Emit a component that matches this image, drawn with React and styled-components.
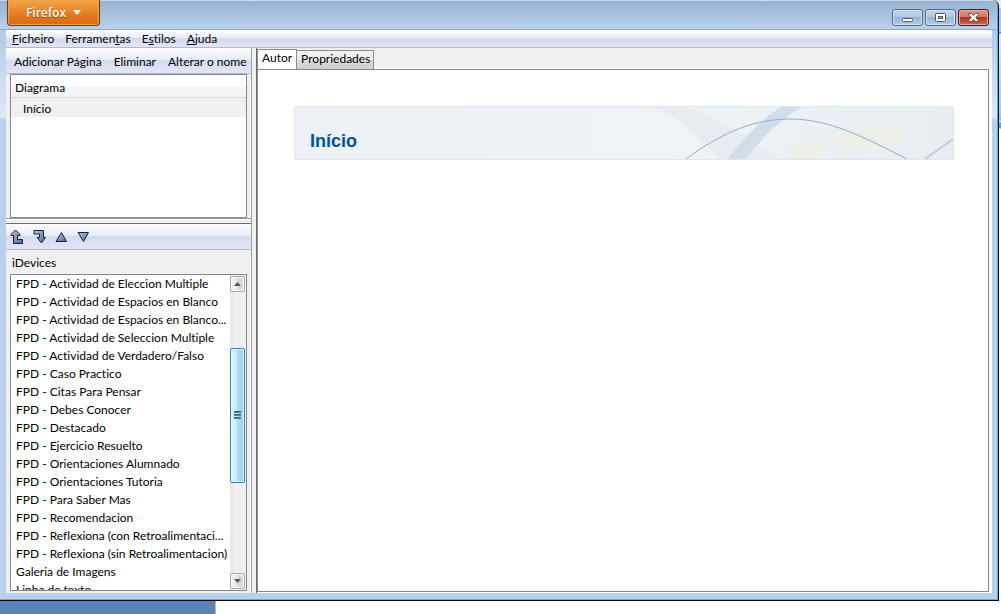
import React from "react";
import styled, { createGlobalStyle } from "styled-components";

const Global = createGlobalStyle`
  * { box-sizing: border-box; }
  html, body { margin: 0; padding: 0; background: #fff; }
  body, button { font-family: Lato, "Open Sans", sans-serif; font-size: 12px; font-variant-ligatures: none; color: #000; }
  button { margin: 0; padding: 0; border: 0; background: none; }
  ul { margin: 0; padding: 0; list-style: none; }
  h1, h2 { margin: 0; font-size: 12px; font-weight: 400; }
`;

const Desktop = styled.div`
  display: grid;
  grid-template: minmax(0, 1fr) 13px / minmax(0, 1fr) 2px;
  height: 100vh;
  overflow: hidden;
`;

const DesktopEdge = styled.div`
  background: linear-gradient(#e9eef5 0 8px, #a9c9f3 8px 32px, #5c86c4 32px 33px, #dfe9f6 34px, #a5c6ee 119px, #6f9fc8 120px, #e4f2fb 121px 122px, #5f9fd0 123px 128px, #fff 129px);
`;

const DesktopStrip = styled.div`
  grid-column: 1 / -1;
  background: linear-gradient(90deg, #5b84bb 0 214px, #6a7686 215px, #fff 216px);
`;

const Window = styled.div`
  display: flex;
  flex-direction: column;
  min-height: 0;
  padding: 0 6px 6px 6px;
  border-right: 1px solid #000;
  border-bottom: 1px solid #000;
  border-top-right-radius: 6px;
  box-shadow: inset -1px -1px 0 #35bfe0;
  background: linear-gradient(#99b4d2, #b3cbe5 30px, #dde9f7 118px, #b9d1ea 119px);
`;

const TitleBar = styled.header`
  display: flex;
  justify-content: space-between;
  flex: none;
  height: 30px;
  margin: 0 -5px 0 -6px;
  padding: 0 8px 0 7px;
  border-top: 1px solid #c7d9ec;
  border-bottom: 1px solid #8fa5c0;
  border-top-right-radius: 6px;
  background: linear-gradient(#98b3d1, #b9d1ea);
`;

const FirefoxButton = styled.button`
  display: flex;
  align-items: center;
  justify-content: center;
  gap: 7px;
  width: 93px;
  height: 26px;
  margin-top: -1px;
  border: 1px solid #6b3c10;
  border-top: 0;
  border-radius: 0 0 4px 4px;
  box-shadow: inset 0 0 0 1px #f3a04a;
  background: linear-gradient(#f3a748, #e0731b 70%, #dc6c14);
  color: #fff;
  font-family: "Open Sans", sans-serif;
  font-weight: 600;
  text-shadow: 0 1px 1px #8a4a10;
`;

const WindowControls = styled.div`
  display: flex;
  gap: 2px;
  padding-top: 8px;
`;

const WindowButton = styled.button`
  display: flex;
  align-items: center;
  justify-content: center;
  width: 31px;
  height: 17px;
  border: 1px solid ${(p) => (p.$close ? "#4f1c26" : "#52698a")};
  border-radius: 3px;
  box-shadow: inset 0 0 0 1px ${(p) => (p.$close ? "#e5a99d" : "#d5e4f3")};
  background: ${(p) =>
    p.$close
      ? "linear-gradient(#dc9a8c, #cf7463 50%, #b23120 50%, #cd6a4e)"
      : "linear-gradient(#c3d6ea, #b0c8e1 50%, #98b4d3 50%, #b4cde7)"};
`;

const Client = styled.div`
  display: flex;
  flex-direction: column;
  flex: 1;
  min-height: 0;
  margin-bottom: 1px;
  background: #f0f0f0;
`;

const bar = `
  display: flex;
  align-items: center;
  flex: none;
  border-bottom: 1px solid #b3b8d3;
  background: linear-gradient(#fff, #e8ecf7 45%, #d4dbee 50%, #e2e7f6);
`;

const MenuBar = styled.nav`
  ${bar}
  gap: 11px;
  height: 18px;
  padding-left: 6px;
`;

const Workspace = styled.div`
  display: flex;
  flex: 1;
  min-height: 0;
`;

const Sidebar = styled.aside`
  display: flex;
  flex-direction: column;
  flex: none;
  width: 246px;
  border-right: 1px solid #a0a0a0;
`;

const Toolbar = styled.div`
  ${bar}
  gap: ${(p) => p.$gap}px;
  height: 26px;
  padding: ${(p) => p.$top}px 0 0 ${(p) => p.$inset}px;
`;

const BarButton = styled.button`
  line-height: 16px;
  white-space: nowrap;
`;

const IconButton = styled.button`
  display: flex;
  width: 14px;
  height: 16px;
`;

const TreeBox = styled.section`
  flex: none;
  height: 144px;
  margin: 0 4px;
  border: 1px solid #828790;
  background: #fff;
`;

const TreeHeader = styled.h2`
  height: 23px;
  padding-left: 4px;
  line-height: 26px;
  border-bottom: 1px solid #d8d8da;
  background: linear-gradient(#fff 50%, #f4f5f7 55%, #f1f2f4);
`;

const TreeRow = styled.li`
  height: 19px;
  padding-left: 12px;
  line-height: 22px;
  background: #f0f0f0;
`;

const Splitter = styled.div`
  flex: none;
  height: 6px;
  border-top: 1px solid #a0a0a0;
  border-bottom: 1px solid #6d6d6d;
  box-shadow: inset 0 1px 0 #fff;
`;

const ListTitle = styled.h2`
  flex: none;
  height: 24px;
  padding-left: 6px;
  line-height: 26px;
`;

const ListBox = styled.section`
  display: flex;
  flex: 1;
  min-height: 0;
  margin: 0 4px 2px;
  border: 1px solid #828790;
  background: #fff;
`;

const DeviceList = styled.ul`
  flex: 1;
  min-width: 0;
  overflow: hidden;
`;

const Device = styled.li`
  height: 18px;
  padding-left: 5px;
  line-height: 18px;
  white-space: nowrap;
`;

const ScrollTrack = styled.div`
  display: flex;
  flex-direction: column;
  flex: none;
  width: 16px;
  padding: 1px 1px 1px 0;
  background: linear-gradient(90deg, #e6e6e6, #f0f0f0 30%, #efefef);
`;

const ScrollArrow = styled.button`
  display: flex;
  align-items: center;
  justify-content: center;
  flex: none;
  width: 15px;
  height: 16px;
  border: 1px solid #a8a8a8;
  border-radius: 2px;
  box-shadow: inset 0 0 0 1px #fafafa;
  background: linear-gradient(90deg, #f3f3f3, #e6e6e6 50%, #d2d2d4 50%, #dcdcdc);
`;

const ScrollSpace = styled.div`
  flex: ${(p) => p.$grow} 1 0;
`;

const ScrollThumb = styled.div`
  display: flex;
  align-items: center;
  justify-content: center;
  flex: 134 1 0;
  width: 15px;
  border: 1px solid #3c7fb1;
  border-radius: 2px;
  box-shadow: inset 0 0 0 1px #e6f6fd;
  background: linear-gradient(90deg, #e0f3fd, #cbeafa 45%, #a9dbf5 50%, #9bd0ee);
`;

const Main = styled.main`
  display: flex;
  flex-direction: column;
  flex: 1;
  min-width: 0;
  margin-left: 4px;
  padding: 0 3px 1px 0;
  border-left: 1px solid #6d6d6d;
  background: linear-gradient(#f0f0f0 20px, #fff 20px);
`;

const Tabs = styled.div`
  display: flex;
  align-items: flex-end;
  flex: none;
  height: 21px;
`;

const Tab = styled.button`
  height: ${(p) => (p.$active ? 20 : 19)}px;
  padding: ${(p) => (p.$active ? "0 4px 3px" : "0 3px 2px 4px")};
  line-height: 16px;
  border: 1px solid #898c95;
  border-bottom: 0;
  border-left-width: ${(p) => (p.$active ? 1 : 0)}px;
  background: ${(p) => (p.$active ? "#fff" : "linear-gradient(#f2f2f2, #ebebeb 50%, #dddddd 50%, #cfcfcf)")};
`;

const Page = styled.article`
  flex: 1;
  padding: 36px 34px 0 36px;
  border: 1px solid #828790;
  background: #fff;
`;

const Banner = styled.div`
  display: grid;
  height: 54px;
  border: 1px solid #e0e6ea;
  background: linear-gradient(90deg, #edf1f5, #eff3f6 60%, #e8edf2);
  overflow: hidden;
  > * { grid-area: 1 / 1; }
`;

const BannerArt = styled.svg`
  display: block;
  justify-self: end;
`;

const PageTitle = styled.h1`
  align-self: end;
  padding: 0 0 7px 15px;
  font-family: "Liberation Sans", Arial, sans-serif;
  font-size: 18px;
  font-weight: 700;
  line-height: 22px;
  color: #00519e;
`;

const devices = [
  "FPD - Actividad de Eleccion Multiple",
  "FPD - Actividad de Espacios en Blanco",
  "FPD - Actividad de Espacios en Blanco...",
  "FPD - Actividad de Seleccion Multiple",
  "FPD - Actividad de Verdadero/Falso",
  "FPD - Caso Practico",
  "FPD - Citas Para Pensar",
  "FPD - Debes Conocer",
  "FPD - Destacado",
  "FPD - Ejercicio Resuelto",
  "FPD - Orientaciones Alumnado",
  "FPD - Orientaciones Tutoria",
  "FPD - Para Saber Mas",
  "FPD - Recomendacion",
  "FPD - Reflexiona (con Retroalimentaci...",
  "FPD - Reflexiona (sin Retroalimentacion)",
  "Galeria de Imagens",
  "Linha de texto",
];

const moves = [
  ["Promover", "M5.5 1 L10 5.5 V6.5 H7.5 V10.5 H12.5 V14.5 H3.5 V6.5 H1 V5.5 Z"],
  ["Despromover", "M2 1.5 H11.5 V8.5 H13.5 L9.5 14 L5 8.5 H7.5 V5 H2 Z"],
  ["Mover para cima", "M7.5 3.5 L12.5 12.5 H2 Z"],
  ["Mover para baixo", "M2 3.5 H12.5 L7.5 12.5 Z"],
];

export default function App() {
  return (
    <>
      <Global />
      <Desktop>
        <Window>
          <TitleBar>
            <FirefoxButton>
              Firefox
              <svg width="8" height="5"><path d="M0 0H8L4 5Z" fill="#fff" /></svg>
            </FirefoxButton>
            <WindowControls>
              <WindowButton aria-label="Minimizar">
                <svg width="13" height="11"><rect x="1.5" y="6.5" width="10" height="3" rx="1" fill="#fff" stroke="#505765" /></svg>
              </WindowButton>
              <WindowButton aria-label="Maximizar">
                <svg width="13" height="11">
                  <rect x="1.5" y="1.5" width="10" height="8" rx="1" fill="#fff" stroke="#505765" />
                  <rect x="4.5" y="4.5" width="4" height="2" fill="#9ab5d5" stroke="#505765" />
                </svg>
              </WindowButton>
              <WindowButton $close aria-label="Fechar">
                <svg width="13" height="11">
                  <path d="M1.5 1.5H4.5L6.5 3.5L8.5 1.5H11.5V2.5L8.8 5.5L11.5 8.5V9.5H8.5L6.5 7.5L4.5 9.5H1.5V8.5L4.2 5.5L1.5 2.5Z" fill="#fff" stroke="#56505c" />
                </svg>
              </WindowButton>
            </WindowControls>
          </TitleBar>
          <Client>
            <MenuBar>
              <BarButton><u>F</u>icheiro</BarButton>
              <BarButton>Ferramen<u>t</u>as</BarButton>
              <BarButton>E<u>s</u>tilos</BarButton>
              <BarButton><u>A</u>juda</BarButton>
            </MenuBar>
            <Workspace>
              <Sidebar>
                <Toolbar $gap={12} $inset={8} $top={2}>
                  <BarButton>Adicionar Página</BarButton>
                  <BarButton>Eliminar</BarButton>
                  <BarButton>Alterar o nome</BarButton>
                </Toolbar>
                <TreeBox>
                  <TreeHeader>Diagrama</TreeHeader>
                  <ul><TreeRow>Início</TreeRow></ul>
                </TreeBox>
                <Splitter />
                <Toolbar $gap={8} $inset={4} $top={0}>
                  {moves.map(([label, d]) => (
                    <IconButton key={label} aria-label={label}>
                      <svg width="14" height="16">
                        <defs>
                          <linearGradient id="steel" x1="0" y1="0" x2="1" y2="1">
                            <stop offset="0" stopColor="#b4c4dd" />
                            <stop offset="1" stopColor="#4a6a9c" />
                          </linearGradient>
                        </defs>
                        <path d={d} fill="url(#steel)" stroke="#1b1f2a" strokeLinejoin="round" />
                      </svg>
                    </IconButton>
                  ))}
                </Toolbar>
                <ListTitle>iDevices</ListTitle>
                <ListBox>
                  <DeviceList>
                    {devices.map((name) => <Device key={name}>{name}</Device>)}
                  </DeviceList>
                  <ScrollTrack>
                    <ScrollArrow aria-label="Subir"><svg width="7" height="4"><path d="M0 4L3.5 0L7 4Z" fill="#555" /></svg></ScrollArrow>
                    <ScrollSpace $grow={57} />
                    <ScrollThumb>
                      <svg width="7" height="9"><path d="M0 1H7M0 4H7M0 7H7" stroke="#4a8aab" strokeWidth="2" /><path d="M0 .5H7M0 3.5H7M0 6.5H7" stroke="#2b637f" /></svg>
                    </ScrollThumb>
                    <ScrollSpace $grow={91} />
                    <ScrollArrow aria-label="Descer"><svg width="7" height="4"><path d="M0 0L3.5 4L7 0Z" fill="#555" /></svg></ScrollArrow>
                  </ScrollTrack>
                </ListBox>
              </Sidebar>
              <Main>
                <Tabs role="tablist">
                  <Tab $active role="tab" aria-selected="true">Autor</Tab>
                  <Tab role="tab" aria-selected="false">Propriedades</Tab>
                </Tabs>
                <Page>
                  <Banner>
                    <BannerArt width="340" height="52" viewBox="0 0 340 52">
                      <path d="M40 0C68 10 84 28 106 52H166C138 30 100 8 72 0Z" fill="#e8ebf0" />
                      <path d="M174 40Q192 33 212 37L212 44L198 52H170L184 46ZM216 34Q240 22 260 20L294 24Q288 38 262 44L252 36L226 48Q232 36 216 34Z" fill="#edf0e6" />
                      <path d="M115 52Q142 16 168 0H189Q158 18 133 52Z" fill="#d0deec" />
                      <path d="M73 52C111 24 143 12 177 12C216 12 251 30 294 52" fill="none" stroke="#8eabd0" />
                      <path d="M312 52L340 32" fill="none" stroke="#c8c9de" strokeWidth="2" />
                    </BannerArt>
                    <PageTitle>Início</PageTitle>
                  </Banner>
                </Page>
              </Main>
            </Workspace>
          </Client>
        </Window>
        <DesktopEdge />
        <DesktopStrip />
      </Desktop>
    </>
  );
}
